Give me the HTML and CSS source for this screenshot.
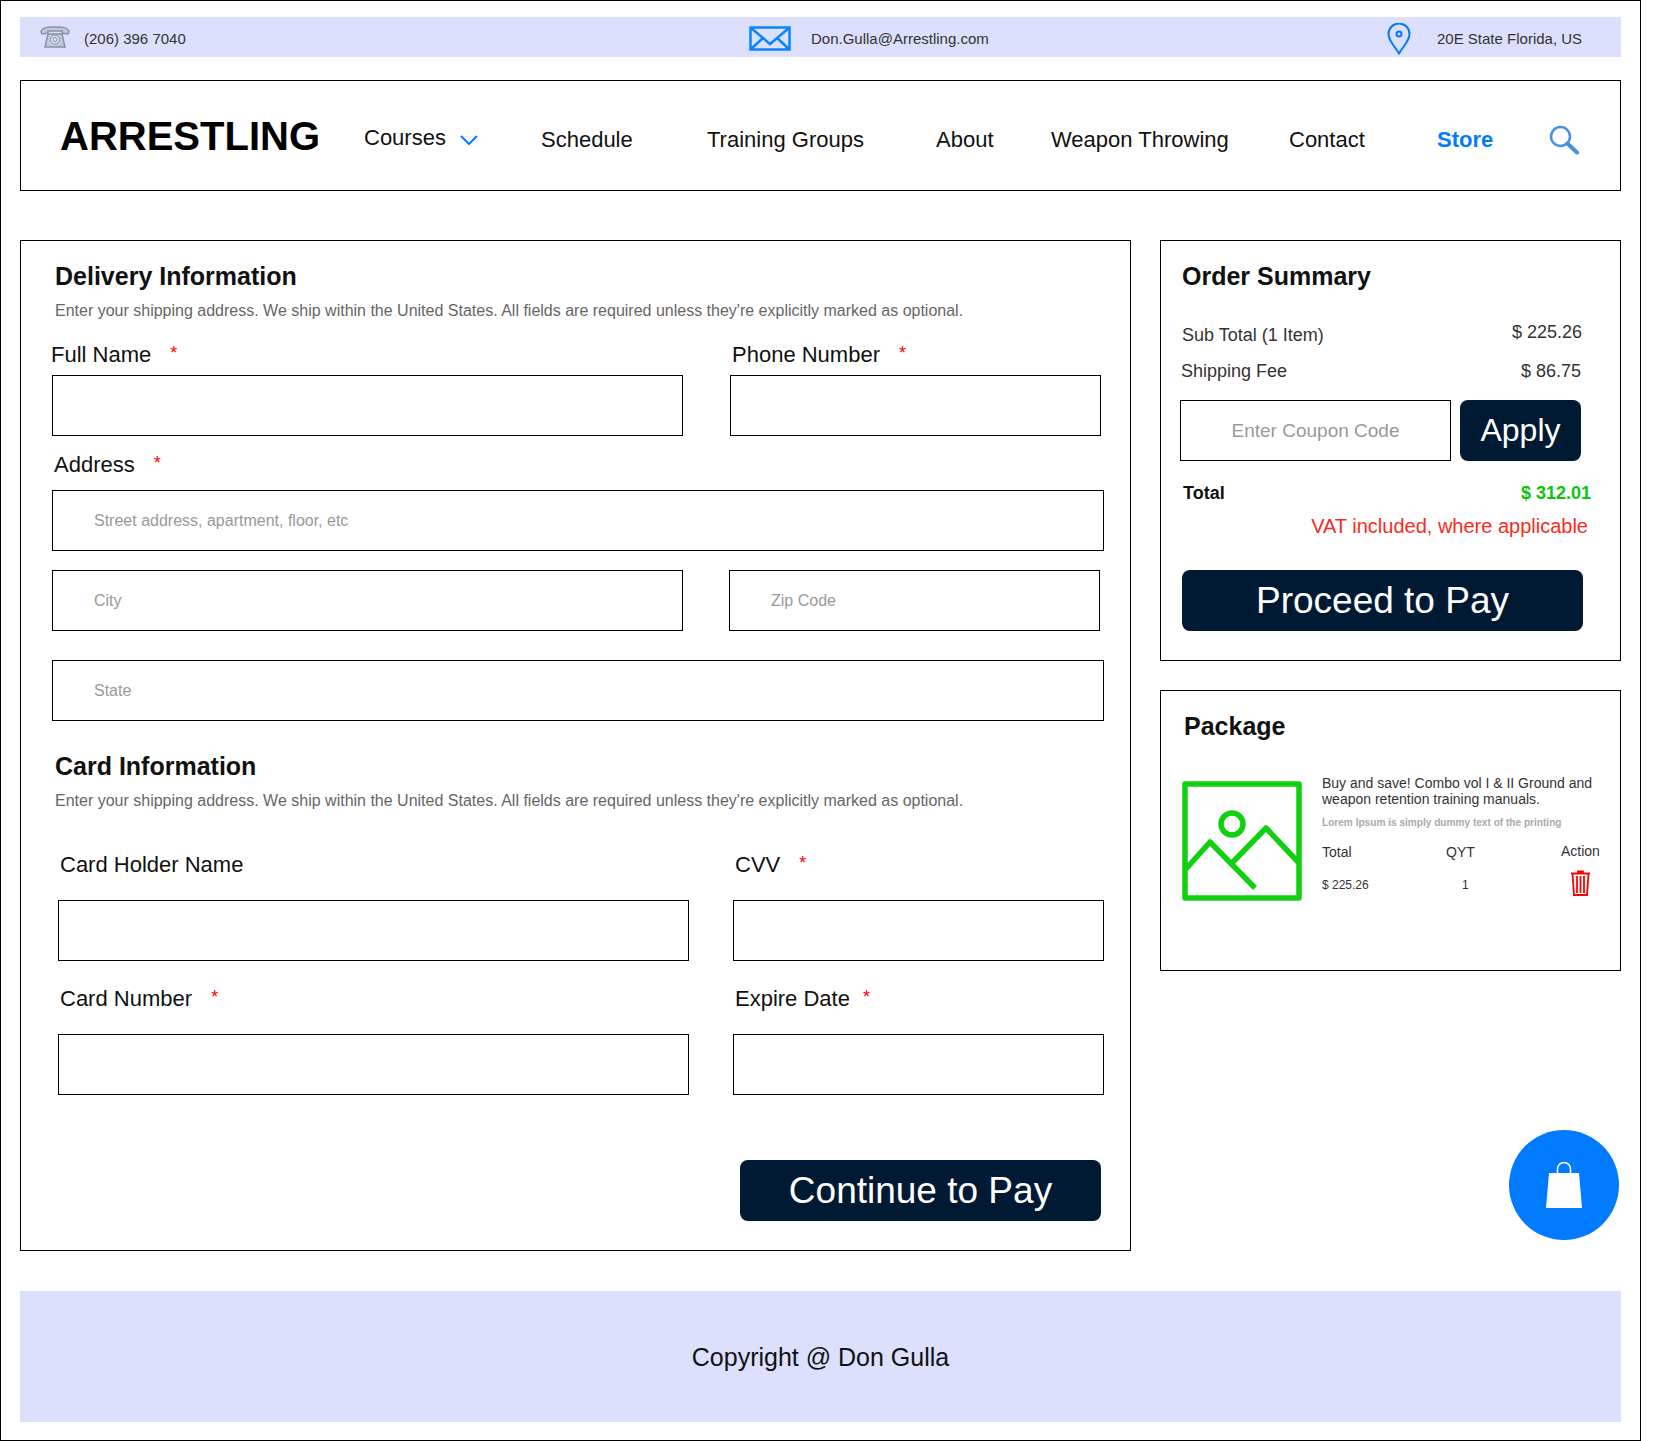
FILE: index.html
```html
<!DOCTYPE html>
<html lang="en">
<head>
    <meta charset="UTF-8">
    <meta name="viewport" content="width=device-width, initial-scale=1.0">
    <title>Arrestling - Checkout</title>
    <link rel="stylesheet" href="styles.css">
</head>
<body>
    <div class="frame">
        <!-- contact strip -->
        <div class="topbar">
            <div class="contact">
                <svg class="icon-phone" viewBox="0 0 30 22"><path d="M1 6C2 1 8 1 15 1s13 0 14 5l-1 2-6-1V5H8v2L2 8z" fill="#c3c9d9" stroke="#8791a5" stroke-width="1.5"/><path d="M8 8h14l3 13H5z" fill="#c3c9d9" stroke="#8791a5" stroke-width="1.5"/><circle cx="15" cy="13.5" r="4.5" fill="#dde0fd" stroke="#8791a5"/><circle cx="15" cy="13.5" r="2" fill="none" stroke="#8791a5"/></svg>
                <span>(206) 396 7040</span>
            </div>
            <div class="contact">
                <svg class="icon-mail" viewBox="0 0 42 25"><path d="M1.500 1.500h39v22h-39zM1.500 1.500L21 18 40.500 1.500M1.500 23.500L14 12M40.500 23.500L28 12" fill="none" stroke="#0a84ff" stroke-width="2.500"/></svg>
                <span>Don.Gulla@Arrestling.com</span>
            </div>
            <div class="contact">
                <svg class="icon-pin" viewBox="0 0 26 32"><path d="M13 30.500C8 22 2.500 18 2.500 11a10.500 10.500 0 0 1 21 0C23.500 18 18 22 13 30.500z" fill="none" stroke="#007bff" stroke-width="2"/><circle cx="13" cy="11" r="2.500" fill="none" stroke="#007bff" stroke-width="2"/></svg>
                <span>20E State Florida, US</span>
            </div>
        </div>

        <!-- main nav -->
        <nav class="nav">
            <a class="logo">ARRESTLING</a>
            <a class="nav-link courses">Courses <svg class="icon-caret" viewBox="0 0 18 10"><path d="M1 1l8 8 8-8" fill="none" stroke="#007bff" stroke-width="2"/></svg></a>
            <a class="nav-link">Schedule</a>
            <a class="nav-link">Training Groups</a>
            <a class="nav-link">About</a>
            <a class="nav-link">Weapon Throwing</a>
            <a class="nav-link">Contact</a>
            <a class="nav-link store">Store</a>
            <svg class="icon-search" viewBox="0 0 30 30"><circle cx="11.500" cy="11.500" r="9.500" fill="none" stroke="#4a90e2" stroke-width="2.500"/><path d="M18.500 18.500l9.500 9" stroke="#4a90e2" stroke-width="4" stroke-linecap="round"/></svg>
        </nav>

        <div class="content">
            <form class="panel delivery">
                <h2 class="panel-title">Delivery Information</h2>
                <p class="panel-desc">Enter your shipping address. We ship within the United States. All fields are required unless they're explicitly marked as optional.</p>

                <div class="form-row name-row">
                    <div>
                        <label class="field-label name-label">Full Name <span class="req">*</span></label>
                        <div class="input"></div>
                    </div>
                    <div>
                        <label class="field-label phone-label">Phone Number <span class="req">*</span></label>
                        <div class="input"></div>
                    </div>
                </div>

                <label class="field-label address-label">Address <span class="req">*</span></label>
                <div class="input wide">Street address, apartment, floor, etc</div>
                <div class="form-row city-row">
                    <div class="input">City</div>
                    <div class="input">Zip Code</div>
                </div>
                <div class="input wide state">State</div>

                <h2 class="panel-title card-title">Card Information</h2>
                <p class="panel-desc">Enter your shipping address. We ship within the United States. All fields are required unless they're explicitly marked as optional.</p>

                <div class="form-row card-row">
                    <div>
                        <label class="field-label card-label">Card Holder Name</label>
                        <div class="input"></div>
                    </div>
                    <div>
                        <label class="field-label card-label">CVV <span class="req">*</span></label>
                        <div class="input"></div>
                    </div>
                    <div>
                        <label class="field-label card-label">Card Number <span class="req">*</span></label>
                        <div class="input"></div>
                    </div>
                    <div>
                        <label class="field-label card-label">Expire Date <span class="req req-close">*</span></label>
                        <div class="input"></div>
                    </div>
                </div>

                <div class="form-actions">
                    <button type="button" class="btn btn-continue">Continue to Pay</button>
                </div>
            </form>

            <aside class="sidebar">
                <section class="panel summary">
                    <h2 class="panel-title">Order Summary</h2>
                    <div class="summary-line"><span>Sub Total (1 Item)</span><span class="amount-up">$ 225.26</span></div>
                    <div class="summary-line fee"><span>Shipping Fee</span><span>$ 86.75</span></div>
                    <div class="coupon">
                        <div class="coupon-input">Enter Coupon Code</div>
                        <button type="button" class="btn btn-apply">Apply</button>
                    </div>
                    <div class="total"><span>Total</span><span class="total-amount">$ 312.01</span></div>
                    <p class="vat">VAT included, where applicable</p>
                    <button type="button" class="btn btn-proceed">Proceed to Pay</button>
                </section>

                <section class="panel package">
                    <h2 class="panel-title">Package</h2>
                    <div class="package-body">
                        <svg class="package-img" viewBox="0 0 120 120"><path d="M3 3h114v114H3zM3 89l25-28 45 46M50 82l34-35 33 35" fill="none" stroke="#11d011" stroke-width="5.500" stroke-linejoin="round"/><circle cx="50" cy="43" r="11" fill="none" stroke="#11d011" stroke-width="5.500"/></svg>
                        <div class="package-info">
                            <p class="package-name">Buy and save! Combo vol I &amp; II Ground and weapon retention training manuals.</p>
                            <p class="package-note">Lorem Ipsum is simply dummy text of the printing</p>
                            <div class="package-table">
                                <span>Total</span><span>QYT</span><span class="action-head">Action</span>
                                <span class="cell-price">$ 225.26</span><span class="cell-qty">1</span>
                                <svg class="icon-trash" viewBox="0 0 21 26"><path d="M1 3.500h19M8 3.500V1.500h5v2M2.500 3.500l1.500 21.500h13l1.500-21.500M7 6v17M10.500 6v17M14 6v17" fill="none" stroke="#f00" stroke-width="1.800"/></svg>
                            </div>
                        </div>
                    </div>
                </section>
            </aside>
        </div>

        <footer class="footer">Copyright @ Don Gulla</footer>

        <a class="cart-fab">
            <svg viewBox="0 0 36 46"><path d="M3 11h30l3 35H0z" fill="#fff"/><path d="M11.500 11V7a6.500 6.500 0 0 1 13 0v4" fill="none" stroke="#fff" stroke-width="1.500"/></svg>
        </a>
    </div>
</body>
</html>
```

FILE: styles.css
```css
*{
    padding: 0;
    margin: 0;
    box-sizing: border-box;
}

:root {
    --line: #000;
    --strip: #dde0fd;
    --navy: #011a33;
    --blue: #007bff;
    --hint: #999;
}

body {
    background-color: #fff;
    font-family: "Liberation Sans", Arial, sans-serif;
    color: #111;
}

.frame {
    position: relative;
    width: 1641px;
    height: 1441px;
    border: 1px solid var(--line);
    padding: 16px 19px 0;
}

/* contact strip */
.topbar {
    display: grid;
    grid-template-columns: 729px 637px 1fr;
    align-items: center;
    width: 1601px;
    height: 40px;
    padding-top: 2px;
    background-color: var(--strip);
    font-size: 15px;
    color: #333;
}

.contact {
    display: flex;
    align-items: center;
}

.icon-phone {
    width: 30px;
    height: 22px;
    margin: -2px 14px 0 20px;
}

.icon-mail {
    width: 42px;
    height: 25px;
    margin-right: 20px;
}

.icon-pin {
    width: 26px;
    height: 32px;
    margin: 2px 25px 0 0;
}

/* nav */
.nav {
    display: grid;
    grid-template-columns: 304px 177px 166px 229px 115px 238px 148px 112px auto;
    align-items: center;
    width: 1601px;
    height: 111px;
    margin-top: 23px;
    padding-left: 39px;
    border: 1px solid var(--line);
    font-size: 22px;
}

.logo {
    padding-top: 2px;
    font-size: 40px;
    font-weight: bold;
    color: #000;
}

.nav-link {
    padding-top: 8px;
}

.courses {
    padding-top: 5px;
}

.store {
    font-weight: bold;
    color: var(--blue);
}

.icon-caret {
    width: 18px;
    height: 10px;
    margin-left: 8px;
}

.icon-search {
    width: 30px;
    height: 30px;
    margin-top: 8px;
}

/* page columns */
.content {
    display: grid;
    grid-template-columns: 1111px 461px;
    column-gap: 29px;
    margin-top: 49px;
}

.panel {
    border: 1px solid var(--line);
}

.panel-title {
    font-size: 25px;
    line-height: 30px;
    color: #111;
}

.panel-desc {
    margin-top: 10px;
    font-size: 16px;
    line-height: 20px;
    color: #666;
}

/* delivery form */
.delivery {
    height: 1011px;
    padding: 20px 0 0 34px;
}

.form-row {
    display: grid;
}

.field-label {
    display: block;
    font-size: 22px;
    line-height: 26px;
}

.req {
    margin-left: 13px;
    color: #f00;
    vertical-align: 3px;
    font-size: 18px;
    line-height: 0;
}

.req-close {
    margin-left: 7px;
}

.input {
    height: 61px;
    padding-left: 41px;
    border: 1px solid var(--line);
    font-size: 16px;
    line-height: 59px;
    color: var(--hint);
}

.name-row {
    grid-template-columns: 631px 371px;
    column-gap: 47px;
    margin: 21px 0 0 -3px;
}

.name-row .field-label {
    margin-bottom: 7px;
}

.name-label {
    margin-left: -1px;
}

.phone-label {
    margin-left: 2px;
}

.address-label {
    margin: 16px 0 12px -1px;
}

.wide {
    width: 1052px;
    margin-left: -3px;
}

.city-row {
    grid-template-columns: 631px 371px;
    column-gap: 46px;
    margin: 19px 0 0 -3px;
}

.state {
    margin-top: 29px;
}

.card-title {
    margin-top: 30px;
}

.card-row {
    grid-template-columns: 631px 371px;
    column-gap: 44px;
    row-gap: 25px;
    margin: 41px 0 0 3px;
}

.card-label {
    margin: 0 0 22px 2px;
}

.form-actions {
    display: flex;
    justify-content: flex-end;
    width: 1046px;
    margin-top: 65px;
}

.btn {
    border: 0;
    border-radius: 8px;
    background-color: var(--navy);
    color: #fff;
    font-family: inherit;
    cursor: pointer;
}

.btn-continue {
    width: 361px;
    height: 61px;
    font-size: 37px;
}

/* order summary */
.sidebar {
    display: flex;
    flex-direction: column;
    gap: 29px;
}

.summary {
    height: 421px;
    padding: 20px 0 0 21px;
}

.summary-line {
    display: flex;
    justify-content: space-between;
    width: 400px;
    margin-top: 32px;
    font-size: 18px;
    line-height: 24px;
    color: #333;
}

.amount-up {
    position: relative;
    top: -3px;
}

.fee {
    margin: 12px 0 0 -1px;
}

.coupon {
    display: flex;
    gap: 9px;
    margin: 17px 0 0 -2px;
}

.coupon-input {
    width: 271px;
    height: 61px;
    border: 1px solid var(--line);
    font-size: 19px;
    line-height: 59px;
    text-align: center;
    color: var(--hint);
}

.btn-apply {
    width: 121px;
    height: 61px;
    font-size: 32px;
}

.total {
    display: flex;
    justify-content: space-between;
    width: 408px;
    margin: 20px 0 0 1px;
    font-size: 18px;
    line-height: 24px;
    font-weight: bold;
}

.total-amount {
    color: #0cc40c;
}

.vat {
    width: 406px;
    margin-top: 9px;
    font-size: 20px;
    line-height: 24px;
    text-align: right;
    color: #f62b1c;
}

.btn-proceed {
    width: 401px;
    height: 61px;
    margin-top: 32px;
    font-size: 37px;
}

/* package */
.package {
    height: 281px;
    padding: 20px 0 0 23px;
}

.package-body {
    display: flex;
    gap: 20px;
    margin: 40px 0 0 -2px;
}

.package-img {
    flex: none;
    width: 120px;
    height: 120px;
}

.package-name {
    margin-top: -6px;
    font-size: 14px;
    line-height: 16px;
    color: #333;
}

.package-note {
    margin-top: 10px;
    font-size: 10.1px;
    line-height: 12px;
    font-weight: bold;
    color: #aaa;
}

.package-table {
    display: grid;
    grid-template-columns: 124px 113px 50px;
    grid-template-rows: 32px 30px;
    align-items: center;
    margin-top: 7px;
    font-size: 14px;
    color: #333;
}

.cell-price {
    padding-top: 4px;
    font-size: 12px;
}

.cell-qty {
    padding: 4px 0 0 16px;
    font-size: 12px;
}

.action-head {
    margin: -2px 0 0 2px;
}

.icon-trash {
    width: 21px;
    height: 26px;
    margin-left: 11px;
}

/* footer */
.footer {
    width: 1601px;
    height: 131px;
    margin-top: 40px;
    background-color: var(--strip);
    font-size: 25px;
    line-height: 133px;
    text-align: center;
}

.cart-fab {
    position: absolute;
    left: 1508px;
    top: 1129px;
    display: flex;
    align-items: center;
    justify-content: center;
    width: 110px;
    height: 110px;
    border-radius: 50%;
    background-color: var(--blue);
}

.cart-fab svg {
    width: 36px;
    height: 46px;
}
```
